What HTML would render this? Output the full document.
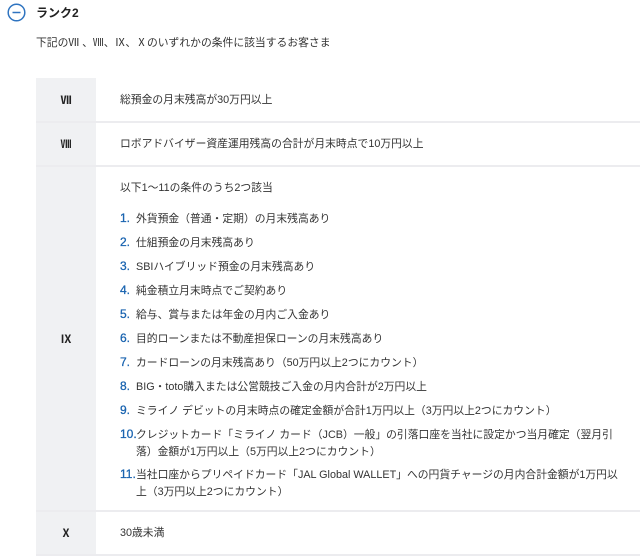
<!DOCTYPE html>
<html><head><meta charset="utf-8"><style>
*{margin:0;padding:0;box-sizing:border-box}
body{width:640px;height:560px;background:#fff;position:relative;overflow:hidden;font-family:"Liberation Sans","Noto Sans CJK JP",sans-serif;color:#333;font-size:10.8px}
.a{position:absolute;white-space:nowrap}
.hd{position:absolute;left:36px;width:60px;background:#f0f1f3;display:flex;align-items:center;justify-content:center;font-weight:bold;font-size:11px;color:#222}
.ln{position:absolute;left:36px;right:0;height:2px;background:#ececef}
.n{color:#1a64b0;font-size:12px;display:inline-block;width:16px;-webkit-text-stroke:0.3px #1a64b0}
.it{position:absolute;left:120px;line-height:17px;white-space:nowrap}
.ind{padding-left:16px}
</style></head><body>
<svg class="a" style="left:7px;top:3px" width="19" height="19" viewBox="0 0 19 19"><circle cx="9.5" cy="9.5" r="8.3" fill="none" stroke="#2f74c0" stroke-width="1.5"/><line x1="5.5" y1="9.5" x2="13.5" y2="9.5" stroke="#2f74c0" stroke-width="1.5"/></svg>
<div class="a" style="left:36px;top:4px;font-weight:bold;font-size:12px;color:#222">ランク2</div>
<div class="a" style="left:36px;top:34px">下記のⅦ 、Ⅷ、Ⅸ、Ⅹのいずれかの条件に該当するお客さま</div>

<div class="hd" style="top:78px;height:43px">Ⅶ</div>
<div class="hd" style="top:123px;height:42px">Ⅷ</div>
<div class="hd" style="top:167px;height:343px">Ⅸ</div>
<div class="hd" style="top:512px;height:42px">Ⅹ</div>
<div class="ln" style="top:121px"></div>
<div class="ln" style="top:165px"></div>
<div class="ln" style="top:510px"></div>
<div class="ln" style="top:554px"></div>

<div class="it" style="top:92px">総預金の月末残高が30万円以上</div>
<div class="it" style="top:136px">ロボアドバイザー資産運用残高の合計が月末時点で10万円以上</div>
<div class="it" style="top:180px">以下1〜11の条件のうち2つ該当</div>
<div class="it" style="top:210px"><span class="n">1.</span>外貨預金（普通・定期）の月末残高あり</div>
<div class="it" style="top:234px"><span class="n">2.</span>仕組預金の月末残高あり</div>
<div class="it" style="top:258px"><span class="n">3.</span>SBIハイブリッド預金の月末残高あり</div>
<div class="it" style="top:282px"><span class="n">4.</span>純金積立月末時点でご契約あり</div>
<div class="it" style="top:306px"><span class="n">5.</span>給与、賞与または年金の月内ご入金あり</div>
<div class="it" style="top:330px"><span class="n">6.</span>目的ローンまたは不動産担保ローンの月末残高あり</div>
<div class="it" style="top:354px"><span class="n">7.</span>カードローンの月末残高あり（50万円以上2つにカウント）</div>
<div class="it" style="top:378px"><span class="n">8.</span>BIG・toto購入または公営競技ご入金の月内合計が2万円以上</div>
<div class="it" style="top:402px"><span class="n">9.</span>ミライノ デビットの月末時点の確定金額が合計1万円以上（3万円以上2つにカウント）</div>
<div class="it" style="top:426px"><span class="n">10.</span>クレジットカード「ミライノ カード（JCB）一般」の引落口座を当社に設定かつ当月確定（翌月引<br><span class="ind">落）金額が1万円以上（5万円以上2つにカウント）</span></div>
<div class="it" style="top:466px"><span class="n">11.</span>当社口座からプリペイドカード「JAL Global WALLET」への円貨チャージの月内合計金額が1万円以<br><span class="ind">上（3万円以上2つにカウント）</span></div>
<div class="it" style="top:525px">30歳未満</div>
</body></html>
